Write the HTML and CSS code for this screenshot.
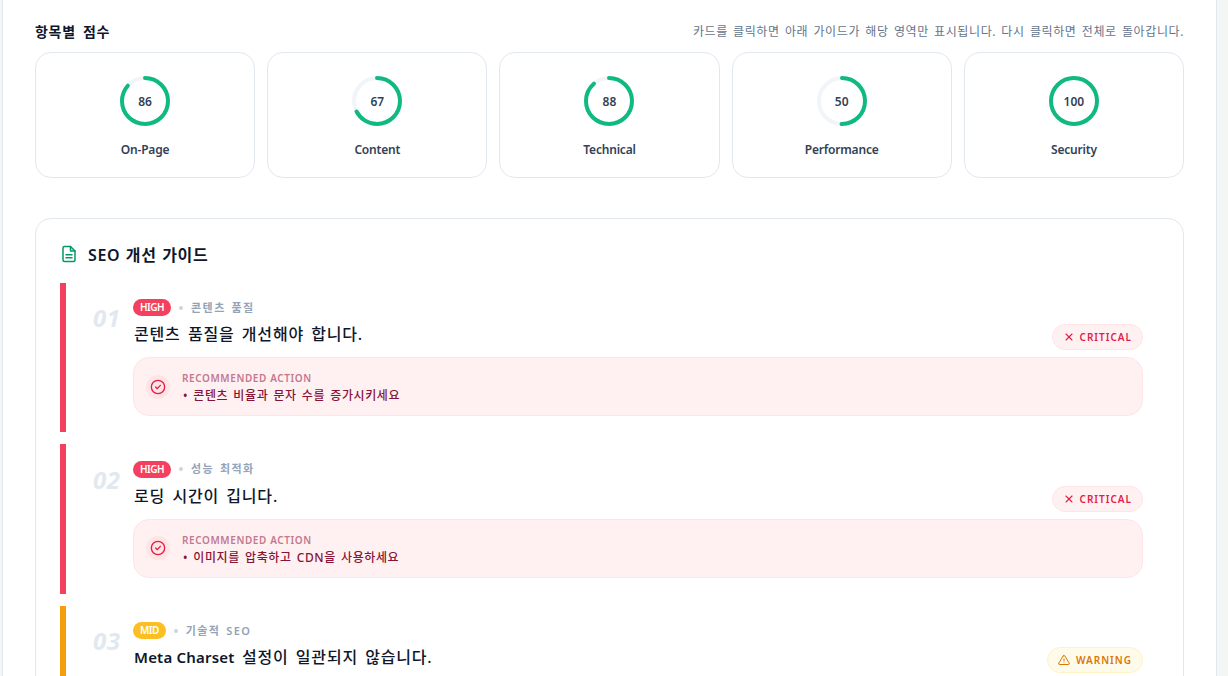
FILE: index.html
```html
<!DOCTYPE html>
<html lang="ko">
<head>
   <meta http-equiv="Content-Type" content="text/html; charset=UTF-8" />
   <title>SEO</title>
   <link rel="stylesheet" href="styles.css">
</head>
<body>
<div id="panel">

    <div class="score-head">
        <h3>항목별 점수</h3>
        <p>카드를 클릭하면 아래 가이드가 해당 영역만 표시됩니다. 다시 클릭하면 전체로 돌아갑니다.</p>
    </div>

    <div class="score-grid">
        <div class="score-card">
            <div class="ring">
                <svg width="50" height="50" viewBox="0 0 50 50"><circle class="track" cx="25" cy="25" r="23"/><circle class="value" cx="25" cy="25" r="23" stroke-dasharray="124.3 144.5"/></svg>
                <span>86</span>
            </div>
            <div class="score-name">On-Page</div>
        </div>
        <div class="score-card">
            <div class="ring">
                <svg width="50" height="50" viewBox="0 0 50 50"><circle class="track" cx="25" cy="25" r="23"/><circle class="value" cx="25" cy="25" r="23" stroke-dasharray="96.8 144.5"/></svg>
                <span>67</span>
            </div>
            <div class="score-name">Content</div>
        </div>
        <div class="score-card">
            <div class="ring">
                <svg width="50" height="50" viewBox="0 0 50 50"><circle class="track" cx="25" cy="25" r="23"/><circle class="value" cx="25" cy="25" r="23" stroke-dasharray="127.2 144.5"/></svg>
                <span>88</span>
            </div>
            <div class="score-name">Technical</div>
        </div>
        <div class="score-card">
            <div class="ring">
                <svg width="50" height="50" viewBox="0 0 50 50"><circle class="track" cx="25" cy="25" r="23"/><circle class="value" cx="25" cy="25" r="23" stroke-dasharray="72.3 144.5"/></svg>
                <span>50</span>
            </div>
            <div class="score-name">Performance</div>
        </div>
        <div class="score-card">
            <div class="ring">
                <svg width="50" height="50" viewBox="0 0 50 50"><circle class="track" cx="25" cy="25" r="23"/><circle class="value" cx="25" cy="25" r="23" stroke-dasharray="144.5 144.5"/></svg>
                <span>100</span>
            </div>
            <div class="score-name">Security</div>
        </div>
    </div>

    <div class="guide">
        <h2>
            <svg width="18" height="18" viewBox="0 0 24 24" fill="none" stroke="#059669" stroke-width="2" stroke-linecap="round" stroke-linejoin="round"><path d="M14 2H6a2 2 0 0 0-2 2v16a2 2 0 0 0 2 2h12a2 2 0 0 0 2-2V8z"/><path d="M14 2v6h6"/><path d="M16 13H8"/><path d="M16 17H8"/></svg>
            SEO 개선 가이드
        </h2>

        <div class="item high">
            <div class="num">01</div>
            <div class="body">
                <div class="item-head">
                    <div>
                        <div class="meta"><span class="tag">HIGH</span><i></i><span class="cat">콘텐츠 품질</span></div>
                        <div class="item-title">콘텐츠 품질을 개선해야 합니다.</div>
                    </div>
                    <div class="pill">
                        <svg width="12" height="12" viewBox="0 0 24 24" fill="none" stroke="currentColor" stroke-width="2.2" stroke-linecap="round"><path d="M18 6 6 18"/><path d="m6 6 12 12"/></svg>
                        CRITICAL
                    </div>
                </div>
                <div class="action">
                    <div class="action-icon">
                        <svg width="16" height="16" viewBox="0 0 24 24" fill="none" stroke="currentColor" stroke-width="2" stroke-linecap="round" stroke-linejoin="round"><circle cx="12" cy="12" r="10"/><path d="m8.5 12 2.5 2.5 4.5-5"/></svg>
                    </div>
                    <div class="action-copy">
                        <div class="action-label">RECOMMENDED ACTION</div>
                        <div class="action-text">• 콘텐츠 비율과 문자 수를 증가시키세요</div>
                    </div>
                </div>
            </div>
        </div>

        <div class="item high">
            <div class="num">02</div>
            <div class="body">
                <div class="item-head">
                    <div>
                        <div class="meta"><span class="tag">HIGH</span><i></i><span class="cat">성능 최적화</span></div>
                        <div class="item-title">로딩 시간이 깁니다.</div>
                    </div>
                    <div class="pill">
                        <svg width="12" height="12" viewBox="0 0 24 24" fill="none" stroke="currentColor" stroke-width="2.2" stroke-linecap="round"><path d="M18 6 6 18"/><path d="m6 6 12 12"/></svg>
                        CRITICAL
                    </div>
                </div>
                <div class="action">
                    <div class="action-icon">
                        <svg width="16" height="16" viewBox="0 0 24 24" fill="none" stroke="currentColor" stroke-width="2" stroke-linecap="round" stroke-linejoin="round"><circle cx="12" cy="12" r="10"/><path d="m8.5 12 2.5 2.5 4.5-5"/></svg>
                    </div>
                    <div class="action-copy">
                        <div class="action-label">RECOMMENDED ACTION</div>
                        <div class="action-text">• 이미지를 압축하고 CDN을 사용하세요</div>
                    </div>
                </div>
            </div>
        </div>

        <div class="item mid">
            <div class="num">03</div>
            <div class="body">
                <div class="item-head">
                    <div>
                        <div class="meta"><span class="tag">MID</span><i></i><span class="cat">기술적 SEO</span></div>
                        <div class="item-title"><b>Meta Charset</b> 설정이 일관되지 않습니다.</div>
                    </div>
                    <div class="pill">
                        <svg width="12" height="12" viewBox="0 0 24 24" fill="none" stroke="currentColor" stroke-width="2" stroke-linecap="round" stroke-linejoin="round"><path d="M10.3 3.9 1.8 18a2 2 0 0 0 1.7 3h17a2 2 0 0 0 1.7-3L13.7 3.9a2 2 0 0 0-3.4 0z"/><path d="M12 10v4"/><path d="M12 17.5h.01"/></svg>
                        WARNING
                    </div>
                </div>
            </div>
        </div>
    </div>

</div>
</body>
</html>
```

FILE: styles.css
```css
* {
    padding: 0; margin: 0;
    box-sizing: border-box;
}
html, body {
    height: 676px;
    overflow: hidden;
}
body {
    background: #f4f6f5;
    font-family: "Noto Sans", "Noto Sans CJK KR", sans-serif;
    color: #0f172a;
}
#panel {
    width: 1215px;
    height: 676px;
    margin-left: 2px;
    padding: 21px 32px 0 32px;
    background: #fff;
    border-left: 1px solid #e2e8f0;
    border-right: 1px solid #e2e8f0;
    overflow: hidden;
}

.score-head {
    display: flex;
    justify-content: space-between;
    align-items: center;
    height: 20px;
    margin-bottom: 11px;
}
.score-head h3 {
    font-size: 14px;
    font-weight: 600;
    letter-spacing: 0.05em;
    word-spacing: 0.2em;
}
.score-head p {
    font-size: 12px;
    letter-spacing: 0.05em;
    word-spacing: 0.13em;
    color: #64748b;
}

.score-grid {
    display: grid;
    grid-template-columns: repeat(5, 1fr);
    gap: 12px;
}
.score-card {
    height: 126px;
    padding-top: 23px;
    border: 1px solid #e2e8f0;
    border-radius: 16px;
    text-align: center;
}
.ring {
    position: relative;
    width: 50px;
    height: 50px;
    margin: 0 auto 15px auto;
}
.ring svg {
    display: block;
    transform: rotate(-90deg);
}
.ring circle {
    fill: none;
    stroke-width: 4;
}
.ring .track {
    stroke: #f1f5f9;
}
.ring .value {
    stroke: #10b981;
    stroke-linecap: round;
}
.ring span {
    position: absolute;
    top: 1px; left: 0;
    width: 50px;
    line-height: 50px;
    font-size: 12px;
    font-weight: 600;
    color: #334155;
}
.score-name {
    font-size: 12px;
    font-weight: 600;
    line-height: 18px;
    letter-spacing: -0.2px;
    color: #334155;
}

.guide {
    height: 600px;
    margin-top: 40px;
    padding: 24px 40px 0 24px;
    border: 1px solid #e2e8f0;
    border-radius: 16px;
}
.guide h2 {
    display: flex;
    align-items: center;
    gap: 10px;
    height: 24px;
    margin-bottom: 15.9px;
    padding-bottom: 2px;
    font-size: 16px;
    font-weight: 600;
    letter-spacing: 0.04em;
    word-spacing: 0.05em;
}

.item {
    display: flex;
    height: 149.5px;
    margin-bottom: 12px;
    padding: 16.4px 0 0 27px;
    border-left: 6px solid #f43f5e;
}
.item.mid {
    border-left-color: #f59e0b;
}
.num {
    width: 40px;
    padding-top: 4px;
    font-size: 24px;
    font-weight: 700;
    font-style: italic;
    line-height: 30px;
    letter-spacing: 0.5px;
    color: #e2e8f0;
}
.body {
    flex: 1;
}
.item-head {
    display: flex;
    justify-content: space-between;
    align-items: flex-end;
    margin-bottom: 11px;
}
.meta {
    display: flex;
    align-items: center;
    height: 17px;
    font-size: 11px;
    font-weight: 600;
    color: #94a3b8;
}
.meta i {
    width: 4px;
    height: 4px;
    margin: 0 8px;
    border-radius: 50%;
    background: #cbd5e1;
}
.cat {
    padding-bottom: 2px;
    letter-spacing: 1.4px;
    word-spacing: 1.6px;
}
.tag {
    display: block;
    padding: 0 7px;
    border-radius: 9px;
    background: #f43f5e;
    color: #fff;
    font-size: 10px;
    font-weight: 600;
    line-height: 17px;
    letter-spacing: -0.5px;
}
.mid .tag {
    background: #fbbf24;
}
.item-title {
    margin-top: 6px;
    padding-left: 1px;
    font-size: 16px;
    font-weight: 500;
    line-height: 24px;
    letter-spacing: 0.8px;
    word-spacing: 2.4px;
}
.item-title b {
    font-size: 15px;
    font-weight: 600;
    letter-spacing: 0.2px;
    word-spacing: 0;
}
.pill {
    display: flex;
    align-items: center;
    gap: 5px;
    height: 26px;
    margin-bottom: -4px;
    padding: 0 10px;
    border: 1px solid #ffe4e6;
    border-radius: 13px;
    background: #fff1f2;
    color: #e11d48;
    font-size: 10px;
    font-weight: 600;
    letter-spacing: 1px;
}
.mid .pill {
    gap: 6px;
    border-color: #fef3c7;
    background: #fffbeb;
    color: #d97706;
}

.action {
    display: flex;
    align-items: center;
    gap: 12px;
    height: 59px;
    padding-left: 12px;
    border: 1px solid #ffe4e6;
    border-radius: 16px;
    background: #fff1f2;
}
.action-icon {
    display: flex;
    align-items: center;
    justify-content: center;
    width: 24px;
    height: 24px;
    border-radius: 50%;
    background: #ffe4e6;
    color: #e11d48;
}
.action-copy {
    padding-top: 4px;
}
.action-label {
    font-size: 10px;
    font-weight: 600;
    line-height: 14px;
    letter-spacing: 0.6px;
    color: #c4788f;
}
.action-text {
    padding-left: 1px;
    font-size: 12px;
    font-weight: 500;
    line-height: 21px;
    letter-spacing: 0.05em;
    word-spacing: 0.12em;
    color: #881337;
}
```
